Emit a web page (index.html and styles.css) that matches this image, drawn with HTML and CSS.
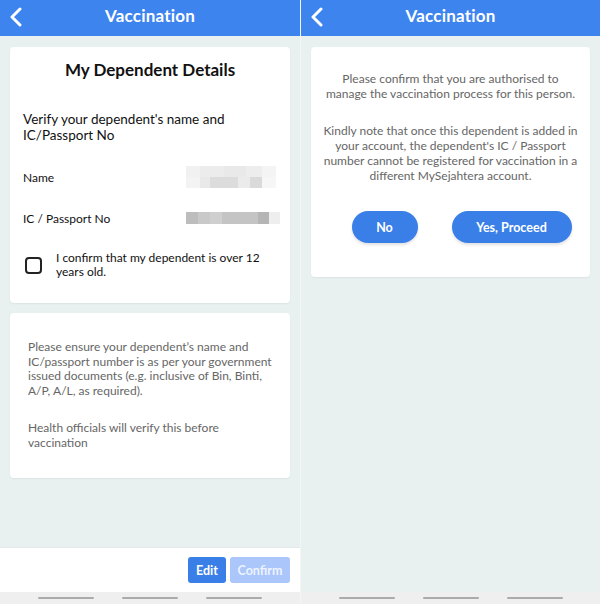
FILE: index.html
```html
<!DOCTYPE html>
<html>
<head>
<meta charset="utf-8">
<link rel="stylesheet" href="styles.css">
</head>
<body>
<div class="screens">
  <section class="screen">
    <header class="topbar">
      <svg class="back" width="14" height="20" viewBox="0 0 14 20"><path d="M11 2 L3 10 L11 18" fill="none" stroke="#fff" stroke-width="3" stroke-linecap="round" stroke-linejoin="round"/></svg>
      <span class="title">Vaccination</span>
    </header>
    <main class="content">
      <div class="card details">
        <h1 class="card-title">My Dependent Details</h1>
        <p class="verify">Verify your dependent's name and IC/Passport No</p>
        <div class="field name-row">
          <span class="label">Name</span>
          <span class="blur blur-name">
            <span class="row"><i style="width:14px;background:#f1f1f1"></i><i style="width:24px;background:#ececec"></i><i style="width:22px;background:#e9e9e9"></i><i style="width:16px;background:#ededed"></i><i style="width:14px;background:#f4f4f4"></i></span>
            <span class="row"><i style="width:14px;background:#f3f3f3"></i><i style="width:10px;background:#e9e9e9"></i><i style="width:28px;background:#dcdcdc"></i><i style="width:12px;background:#ebebeb"></i><i style="width:12px;background:#dadada"></i><i style="width:14px;background:#f6f6f6"></i></span>
          </span>
        </div>
        <div class="field ic-row">
          <span class="label">IC / Passport No</span>
          <span class="blur blur-ic"><i style="width:12px;background:#bdbdbd"></i><i style="width:12px;background:#c9c9c9"></i><i style="width:12px;background:#cfcfcf"></i><i style="width:36px;background:#c4c4c4"></i><i style="width:11px;background:#b5b5b5"></i><i style="width:11px;background:#eeeeee"></i></span>
        </div>
        <label class="check">
          <span class="box"></span>
          <span class="check-text">I confirm that my dependent is over 12 years old.</span>
        </label>
      </div>
      <div class="card notes">
        <p>Please ensure your dependent’s name and IC/passport number is as per your government issued documents (e.g. inclusive of Bin, Binti, A/P, A/L, as required).</p>
        <p>Health officials will verify this before vaccination</p>
      </div>
    </main>
    <footer class="actionbar">
      <button class="btn-sq edit">Edit</button>
      <button class="btn-sq confirm">Confirm</button>
    </footer>
    <nav class="navbar"><span></span><span></span><span></span></nav>
  </section>

  <section class="screen">
    <header class="topbar">
      <svg class="back" width="14" height="20" viewBox="0 0 14 20"><path d="M11 2 L3 10 L11 18" fill="none" stroke="#fff" stroke-width="3" stroke-linecap="round" stroke-linejoin="round"/></svg>
      <span class="title">Vaccination</span>
    </header>
    <main class="content">
      <div class="card dialog">
        <p>Please confirm that you are authorised to manage the vaccination process for this person.</p>
        <p>Kindly note that once this dependent is added in your account, the dependent's IC / Passport number cannot be registered for vaccination in a different MySejahtera account.</p>
        <div class="pill-row">
          <button class="pill no">No</button>
          <button class="pill yes">Yes, Proceed</button>
        </div>
      </div>
    </main>
    <div class="spacer"></div>
    <nav class="navbar"><span></span><span></span><span></span></nav>
  </section>
</div>
</body>
</html>
```
FILE: styles.css
```css
* { box-sizing: border-box; }
html, body { margin: 0; padding: 0; }
body {
  width: 600px;
  height: 604px;
  overflow: hidden;
  background: #fff;
  font-family: Lato, "Noto Sans", "Liberation Sans", sans-serif;
}
.screens {
  display: flex;
  gap: 1px;
  height: 604px;
  background: #f4f6f6;
}
.screen {
  width: 300px;
  flex: 0 0 auto;
  display: flex;
  flex-direction: column;
  background: #e9f0f0;
  height: 604px;
}
.screen + .screen { width: 299px; }
.topbar {
  height: 36px;
  background: #3d84ee;
  display: flex;
  align-items: center;
  justify-content: center;
  padding-bottom: 5px;
  position: relative;
}
.back {
  position: absolute;
  left: 9px;
  top: 7px;
}
.title {
  color: #fff;
  font-weight: 700;
  font-size: 17px;
  letter-spacing: 0.2px;
}
.content {
  padding: 11px 10px 0 10px;
  display: flex;
  flex-direction: column;
  gap: 10px;
}
.card {
  background: #fff;
  border-radius: 4px;
  box-shadow: 0 1px 2px rgba(0,0,0,0.06);
}
.details {
  height: 256px;
  padding: 11px 13px 0 13px;
}
.card-title {
  margin: 0;
  text-align: center;
  font-size: 17px;
  font-weight: 700;
  color: #111;
  line-height: 24px;
}
.verify {
  margin: 29px 0 0 0;
  font-size: 13.5px;
  line-height: 16px;
  color: #111;
}
.field {
  display: flex;
  align-items: center;
  justify-content: space-between;
}
.label {
  font-size: 12px;
  color: #111;
}
.name-row { margin-top: 22px; height: 24px; }
.ic-row { margin-top: 22px; height: 14px; }
.blur {
  display: flex;
  flex-direction: column;
  width: 90px;
  margin-right: 1px;
}
.blur .row { display: flex; height: 11px; }
.blur i { display: block; height: 100%; }
.blur-ic { flex-direction: row; height: 12px; width: 94px; margin-right: -3px; }
.check {
  display: flex;
  align-items: center;
  gap: 14px;
  margin-top: 26px;
  padding-left: 2px;
}
.box {
  width: 17px;
  height: 17px;
  border: 2px solid #222;
  border-radius: 4px;
  flex: 0 0 auto;
}
.check-text {
  font-size: 12px;
  line-height: 14px;
  color: #111;
  width: 210px;
}
.notes {
  height: 165px;
  padding: 27px 18px 0 18px;
}
.notes p {
  margin: 0 0 23px 0;
  font-size: 12px;
  line-height: 14.5px;
  color: #666;
}
.actionbar {
  margin-top: auto;
  height: 45px;
  background: #fff;
  display: flex;
  justify-content: flex-end;
  align-items: center;
  gap: 4px;
  padding: 0 10px 0 0;
  border-top: 1px solid #e4e8e8;
}
.btn-sq {
  border: none;
  border-radius: 3px;
  height: 26px;
  color: #fff;
  font-family: inherit;
  font-weight: 700;
  font-size: 12.5px;
  padding: 0;
}
.edit { width: 38px; background: #3a7fe8; }
.confirm { width: 60px; background: #aac6fa; color: #eef3ff; }
.navbar {
  height: 12px;
  background: #efefef;
  display: flex;
  justify-content: center;
  gap: 28px;
  padding-top: 5px;
}
.navbar span {
  width: 56px;
  height: 2px;
  background: #ababab;
  border-radius: 1px;
}
.spacer { flex: 1; }
.dialog {
  height: 230px;
  padding: 24px 12px 0 12px;
  text-align: center;
}
.dialog p {
  margin: 0 0 22px 0;
  font-size: 12px;
  line-height: 15px;
  color: #666;
}
.pill-row {
  display: flex;
  justify-content: center;
  gap: 34px;
  margin-top: 28px;
  padding-left: 22px;
}
.pill {
  border: none;
  height: 32px;
  border-radius: 16px;
  background: #3a7fe8;
  color: #fff;
  font-family: inherit;
  font-weight: 700;
  font-size: 12.5px;
  box-shadow: 0 2px 3px rgba(0,0,0,0.12);
}
.no { width: 66px; }
.yes { width: 120px; }
```
